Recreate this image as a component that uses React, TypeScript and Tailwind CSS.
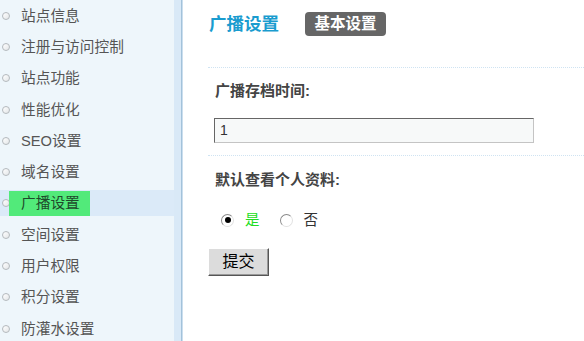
const menu = [
  "站点信息",
  "注册与访问控制",
  "站点功能",
  "性能优化",
  "SEO设置",
  "域名设置",
  "广播设置",
  "空间设置",
  "用户权限",
  "积分设置",
  "防灌水设置",
]

function Bullet() {
  return (
    <span className="h-[8px] w-[8px] shrink-0 rounded-full border border-[#b4b9bd] bg-gradient-to-br from-white to-[#e3e6e8]" />
  )
}

function Radio({ checked }: { checked?: boolean }) {
  return (
    <span className="flex h-[13px] w-[13px] items-center justify-center rounded-full border border-t-[#8a8a8a] border-l-[#8a8a8a] border-r-[#e2e2e2] border-b-[#e2e2e2] bg-white">
      {checked && <span className="h-[6px] w-[6px] rounded-full bg-black" />}
    </span>
  )
}

export default function App() {
  return (
    <div
      className="flex h-[341px] w-[584px] overflow-hidden bg-white"
      style={{ fontFamily: '"Liberation Sans", "Noto Sans CJK SC", sans-serif' }}
    >
      {/* sidebar */}
      <div className="flex h-full">
        <div className="flex w-[174px] flex-col bg-[#eef6fb]">
          {menu.map((m) => {
            const active = m === "广播设置"
            return (
              <div key={m} className="flex h-[31.3px] shrink-0 items-center">
                <div
                  className={
                    active
                      ? "flex h-[26px] w-full items-center bg-[#dbeaf8] pl-[2px]"
                      : "flex h-[26px] w-full items-center pl-[2px]"
                  }
                >
                  <Bullet />
                  {active ? (
                    <span className="ml-[-1px] flex h-[25px] w-[81px] items-center bg-[#52ea7a] pl-[12px] text-[14.7px] text-[#1f4a2c]">
                      {m}
                    </span>
                  ) : (
                    <span className="ml-[11px] text-[14.7px] text-[#555]">{m}</span>
                  )}
                </div>
              </div>
            )
          })}
        </div>
        <div className="w-[7px] bg-[#d9e9f7]" />
        <div className="w-px bg-[#a3c2da]" />
        <div className="w-px bg-[#cbdeee]" />
      </div>

      {/* content */}
      <div className="flex flex-1 flex-col pl-[25px]">
        <div className="flex h-[67px] items-start gap-[26px] pt-[12px]">
          <span className="pl-px pt-[1px] text-[17.5px] font-bold leading-[22px] text-[#1a9ccf]">广播设置</span>
          <span className="flex h-[24px] w-[81px] items-center justify-center rounded-[4px] bg-[#666] text-[15.5px] font-bold text-white">
            基本设置
          </span>
        </div>
        <div className="border-t border-dotted border-[#cfe3f2]" />
        <div className="pl-[7px] pt-[13px] text-[15px] font-bold leading-[20px] text-[#444]">广播存档时间:</div>
        <div className="ml-[6px] mt-[17px] flex h-[25px] w-[320px] items-center border border-t-[#666] border-l-[#666] border-r-[#c4c4c4] border-b-[#c4c4c4] bg-[#f7f9f9] pl-[5px] text-[14px] text-[#333]">
          1
        </div>
        <div className="mt-[12px] border-t border-dotted border-[#cfe3f2]" />
        <div className="pl-[7px] pt-[14px] text-[15px] font-bold leading-[20px] text-[#444]">默认查看个人资料:</div>
        <div className="flex items-center pl-[13px] pt-[20px] text-[14.5px] leading-[20px]">
          <Radio checked />
          <span className="ml-[11px] text-[#22dd22]">是</span>
          <span className="ml-[20px]">
            <Radio />
          </span>
          <span className="ml-[11px] text-[#333]">否</span>
        </div>
        <div className="pt-[18px]">
          <button className="flex h-[28px] w-[61px] items-center justify-center border border-t-white border-l-white border-r-[#555] border-b-[#555] bg-[#dcdcdc] text-[16px] text-black shadow-[inset_-1px_-1px_0_#999]">
            提交
          </button>
        </div>
      </div>
    </div>
  )
}
